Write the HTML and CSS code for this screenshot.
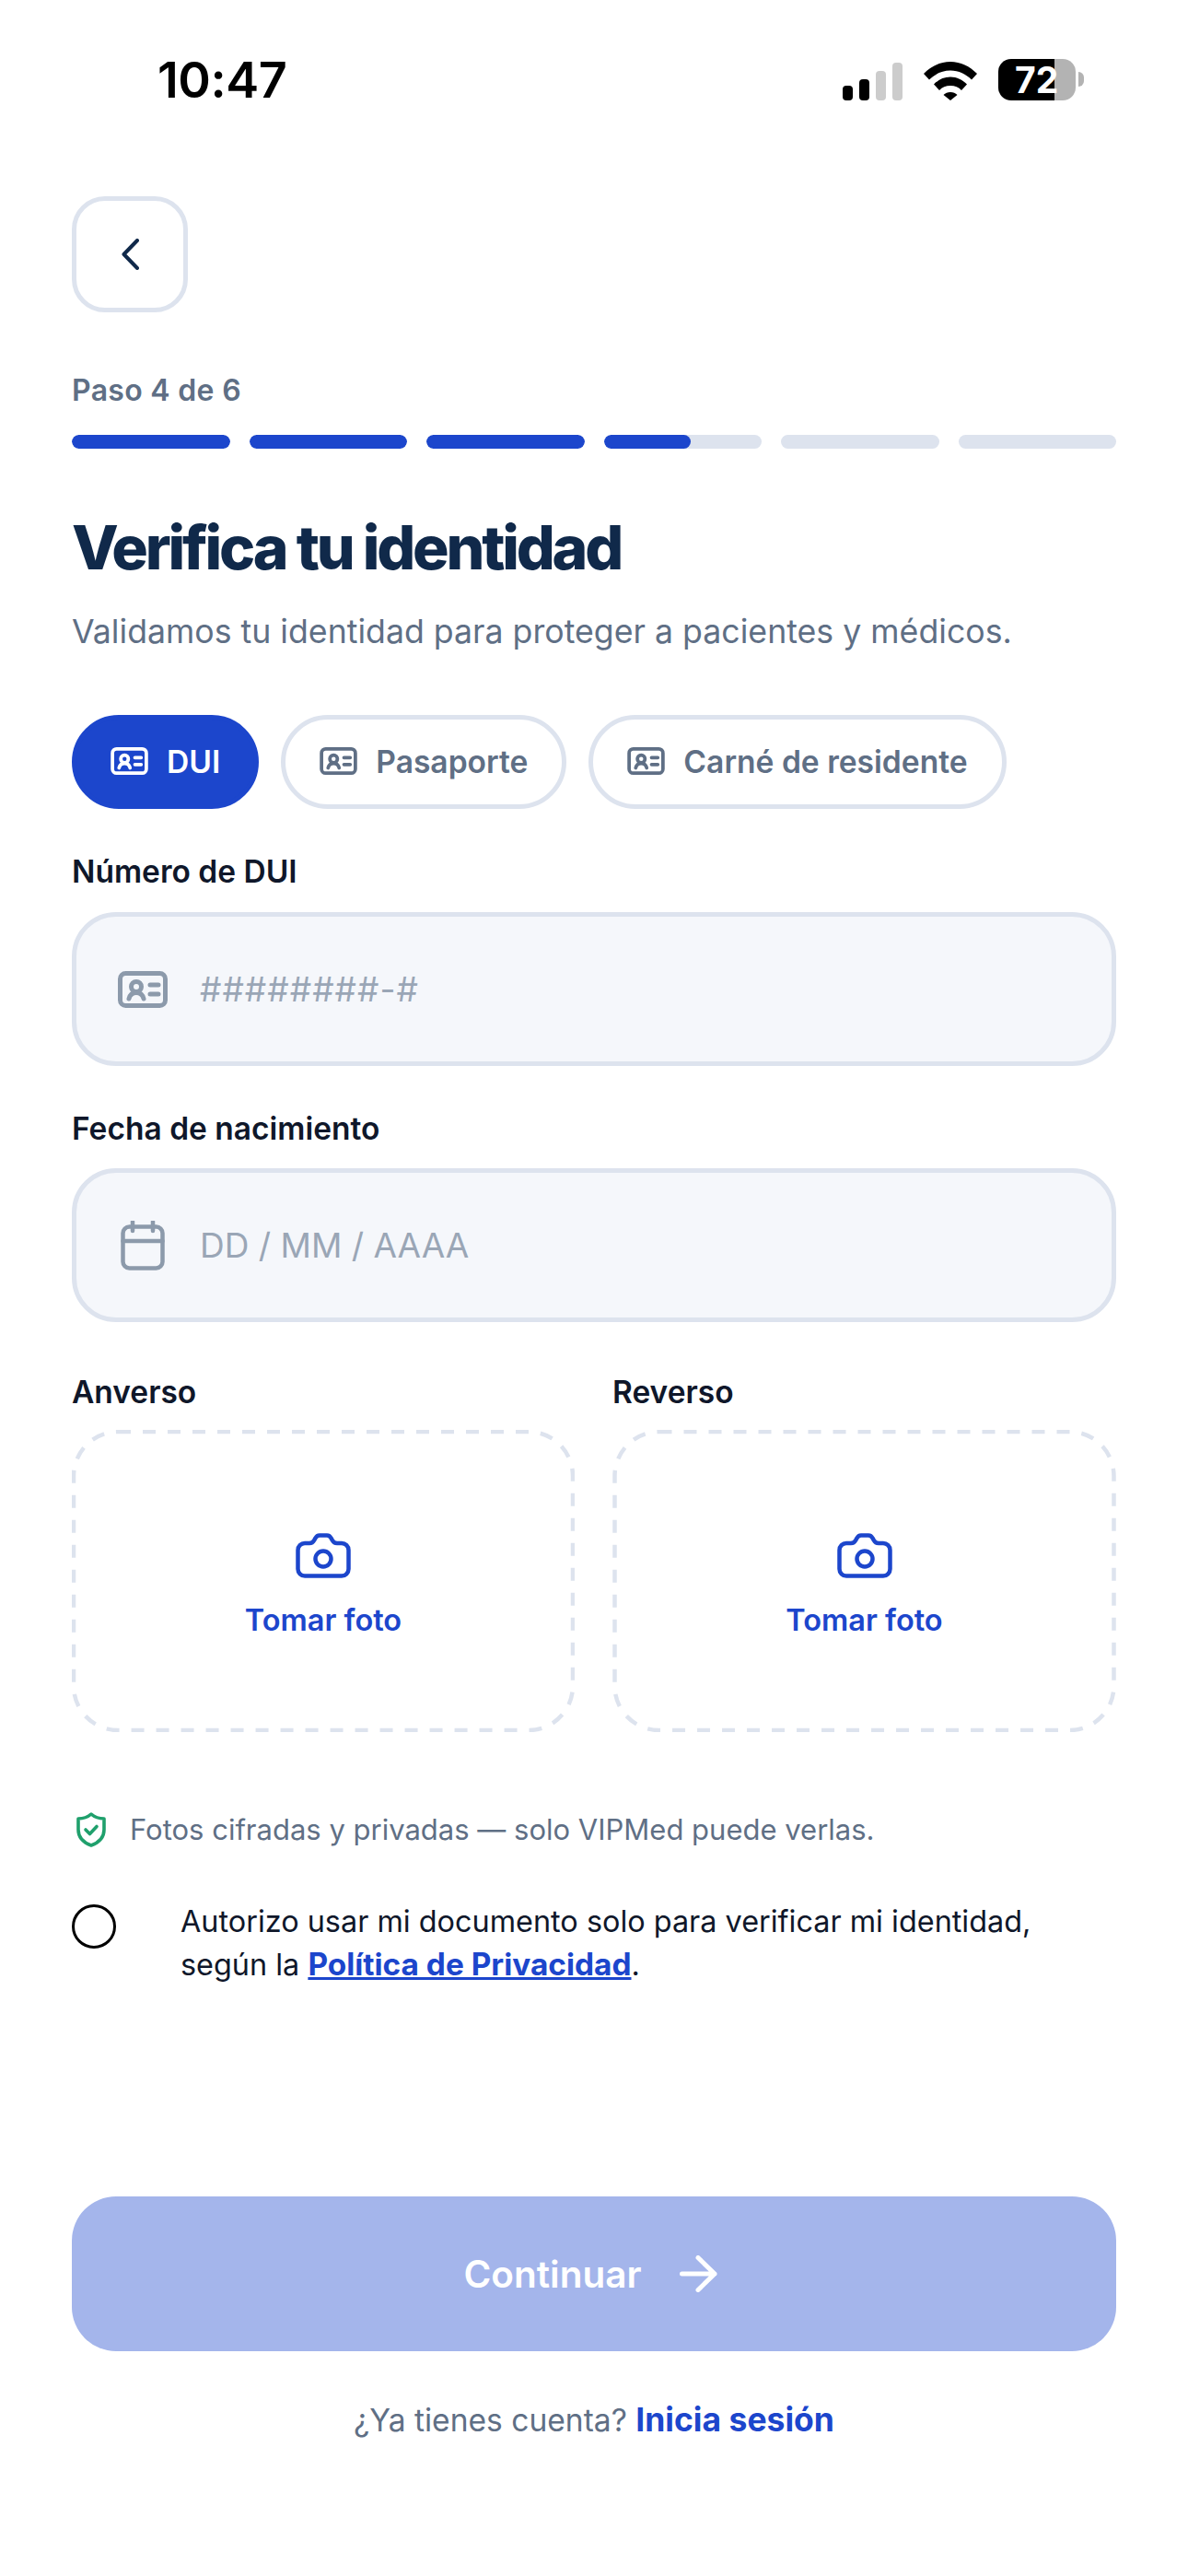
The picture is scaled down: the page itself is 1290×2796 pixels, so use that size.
FILE: index.html
```html
<!DOCTYPE html>
<html lang="es">
<head>
    <meta charset="UTF-8">
    <meta name="viewport" content="width=device-width, initial-scale=1.0">
    <title>Verifica tu identidad</title>
    <link rel="stylesheet" href="styles.css">
</head>
<body>
    <div class="status-bar">
        <span class="status-time">10:47</span>
        <div class="status-icons">
            <svg class="icon-signal" viewBox="0 0 65 41">
                <rect x="0" y="25" width="11" height="16" rx="4" fill="#000"/>
                <rect x="18" y="18" width="11" height="23" rx="4" fill="#000"/>
                <rect x="36" y="9" width="11" height="32" rx="4" fill="#ccc"/>
                <rect x="54" y="0" width="11" height="41" rx="4" fill="#ccc"/>
            </svg>
            <svg class="icon-wifi" viewBox="0 0 58 42">
                <path d="M0 13C8 5 18 0 29 0s21 5 29 13l-6 6.500C46 13.500 38 9.500 29 9.500S12 13.500 6 19.500z" fill="#000"/>
                <path d="M11 24.500C16 19.500 22 16.500 29 16.500s13 3 18 8l-6 6.500C38 27.500 34 26 29 26s-9 1.500-12 5z" fill="#000"/>
                <path d="M21.500 36c2-2 4.500-3 7.500-3s5.500 1 7.500 3L29 42z" fill="#000"/>
            </svg>
            <div class="battery"><span>72</span></div>
        </div>
    </div>

    <main class="page">
        <button class="back-btn" type="button">
            <svg viewBox="0 0 19 34" class="icon-back"><path d="M17 2 2.5 17 17 32"/></svg>
        </button>

        <div class="step-label">Paso 4 de 6</div>
        <div class="progress">
            <div class="progress-seg"><div class="progress-fill full"></div></div>
            <div class="progress-seg"><div class="progress-fill full"></div></div>
            <div class="progress-seg"><div class="progress-fill full"></div></div>
            <div class="progress-seg"><div class="progress-fill half"></div></div>
            <div class="progress-seg"></div>
            <div class="progress-seg"></div>
        </div>

        <h1 class="title">Verifica tu identidad</h1>
        <p class="subtitle">Validamos tu identidad para proteger a pacientes y médicos.</p>

        <div class="tabs">
            <div class="tab tab-active">
                <svg class="icon-id-small" viewBox="0 0 54 40"><rect x="2.5" y="2.5" width="49" height="35" rx="6"/><circle cx="20" cy="17" r="5.5"/><path d="M12 30c1-4 4-6.500 8-6.500s7 2.500 8 6.500M35 15h9M35 25h9"/></svg>
                DUI
            </div>
            <div class="tab">
                <svg class="icon-id-small" viewBox="0 0 54 40"><rect x="2.5" y="2.5" width="49" height="35" rx="6"/><circle cx="20" cy="17" r="5.5"/><path d="M12 30c1-4 4-6.500 8-6.500s7 2.500 8 6.500M35 15h9M35 25h9"/></svg>
                Pasaporte
            </div>
            <div class="tab">
                <svg class="icon-id-small" viewBox="0 0 54 40"><rect x="2.5" y="2.5" width="49" height="35" rx="6"/><circle cx="20" cy="17" r="5.5"/><path d="M12 30c1-4 4-6.500 8-6.500s7 2.500 8 6.500M35 15h9M35 25h9"/></svg>
                Carné de residente
            </div>
        </div>

        <label class="field-label label-dui">Número de DUI</label>
        <div class="input-box">
            <svg class="icon-id" viewBox="0 0 54 40"><rect x="2.5" y="2.5" width="49" height="35" rx="6"/><circle cx="20" cy="17" r="5.5"/><path d="M12 30c1-4 4-6.500 8-6.500s7 2.500 8 6.500M35 15h9M35 25h9"/></svg>
            <span class="placeholder placeholder-id">########-#</span>
        </div>

        <label class="field-label label-fecha">Fecha de nacimiento</label>
        <div class="input-box">
            <svg class="icon-calendar" viewBox="0 0 48 54"><rect x="2.5" y="6.5" width="43" height="45" rx="7"/><path d="M2.5 22h43M13 1v10M35 1v10"/></svg>
            <span class="placeholder">DD / MM / AAAA</span>
        </div>

        <div class="photos">
            <div class="photo-col">
                <div class="field-label">Anverso</div>
                <div class="photo-box">
                    <svg class="photo-dash" viewBox="0 0 546 328"><rect x="2" y="2" width="542" height="324" rx="48"/></svg>
                    <svg class="icon-camera" viewBox="0 0 60 49"><path d="M10 11h5c2.500 0 4-1 5-3l1.500-2.500c1-2 2.500-3 4.500-3h8c2 0 3.500 1 4.500 3L40 8c1 2 2.500 3 5 3h5a7.500 7.500 0 0 1 7.500 7.500V39a7.500 7.500 0 0 1-7.500 7.500H10A7.500 7.500 0 0 1 2.500 39V18.500A7.500 7.500 0 0 1 10 11z"/><circle cx="30" cy="28" r="8.5"/></svg>
                    <span class="photo-text">Tomar foto</span>
                </div>
            </div>
            <div class="photo-col">
                <div class="field-label">Reverso</div>
                <div class="photo-box">
                    <svg class="photo-dash" viewBox="0 0 546 328"><rect x="2" y="2" width="542" height="324" rx="48"/></svg>
                    <svg class="icon-camera" viewBox="0 0 60 49"><path d="M10 11h5c2.500 0 4-1 5-3l1.500-2.500c1-2 2.500-3 4.500-3h8c2 0 3.500 1 4.500 3L40 8c1 2 2.500 3 5 3h5a7.500 7.500 0 0 1 7.500 7.500V39a7.500 7.500 0 0 1-7.500 7.500H10A7.500 7.500 0 0 1 2.500 39V18.500A7.500 7.500 0 0 1 10 11z"/><circle cx="30" cy="28" r="8.5"/></svg>
                    <span class="photo-text">Tomar foto</span>
                </div>
            </div>
        </div>

        <div class="privacy-note">
            <svg class="icon-shield" viewBox="0 0 32 38"><path d="M16 2c4 3.500 9 5 14 5v12c0 9-6 14-14 17C8 33 2 28 2 19V7c5 0 10-1.500 14-5z"/><path d="M10 19l4.500 4.500L22 15.500"/></svg>
            <span>Fotos cifradas y privadas — solo VIPMed puede verlas.</span>
        </div>

        <div class="consent">
            <span class="radio"></span>
            <p>Autorizo usar mi documento solo para verificar mi identidad, según la <a href="#">Política de Privacidad</a>.</p>
        </div>

        <button class="btn-continue" type="button">
            Continuar
            <svg class="icon-arrow" viewBox="0 0 41 40"><path d="M2.5 20H38M20 2.500 38 20 20 37.500"/></svg>
        </button>

        <p class="login-line">¿Ya tienes cuenta? <a href="#">Inicia sesión</a></p>
    </main>
</body>
</html>
```

FILE: styles.css
```css
* {
    box-sizing: border-box;
}
body {
    margin: 0;
    background: #fff;
    font-family: Inter, "Noto Sans", sans-serif;
    color: #0f172a;
}

/* status bar */
.status-bar {
    height: 213px;
    padding: 0 122px 0 171px;
    display: flex;
    justify-content: space-between;
    align-items: flex-start;
}
.status-time {
    margin-top: 54px;
    font-size: 54px;
    line-height: 66px;
    font-weight: 600;
    color: #000;
    letter-spacing: -0.5px;
}
.status-icons {
    margin-top: 64px;
    display: flex;
    align-items: center;
    gap: 23px;
}
.icon-signal {
    width: 65px;
    height: 41px;
    margin-top: 3px;
}
.icon-wifi {
    width: 58px;
    height: 42px;
    margin-top: 2px;
}
.battery {
    position: relative;
    width: 84px;
    height: 45px;
    border-radius: 14px;
    background: linear-gradient(90deg, #000 72.5%, #b3b3b3 72.5%);
    color: #fff;
    font-size: 39px;
    font-weight: 700;
    line-height: 45px;
    padding-left: 18px;
}
.battery::after {
    content: "";
    position: absolute;
    right: -9px;
    top: 14px;
    width: 6px;
    height: 16px;
    border-radius: 0 8px 8px 0;
    background: #b3b3b3;
}

.page {
    padding: 0 78px;
}

.back-btn {
    width: 126px;
    height: 126px;
    padding: 0;
    display: flex;
    align-items: center;
    justify-content: center;
    background: #fff;
    border: 5px solid #dde3ee;
    border-radius: 36px;
}
.icon-back {
    width: 19px;
    height: 34px;
    fill: none;
    stroke: #10294a;
    stroke-width: 4;
    stroke-linecap: round;
    stroke-linejoin: round;
}

.step-label {
    margin-top: 66px;
    font-size: 32px;
    line-height: 38px;
    font-weight: 600;
    letter-spacing: 0.3px;
    color: #5f6f85;
}
.progress {
    margin-top: 29px;
    display: grid;
    grid-template-columns: repeat(6, 1fr);
    gap: 21px;
}
.progress-seg {
    height: 15px;
    border-radius: 8px;
    background: #dde3ee;
    overflow: hidden;
}
.progress-fill {
    height: 100%;
    border-radius: 8px;
    background: #1c46cc;
}
.full {
    width: 100%;
}
.half {
    width: 55%;
}

.title {
    margin: 67px 0 0;
    font-size: 66px;
    line-height: 80px;
    font-weight: 800;
    letter-spacing: -3.2px;
    color: #10294a;
}
.subtitle {
    margin: 28px 0 0;
    font-size: 35.7px;
    line-height: 46px;
    color: #5f6f85;
}

.tabs {
    margin-top: 68px;
    display: flex;
    gap: 24px;
}
.tab {
    height: 102px;
    padding: 0 37px 2px;
    display: flex;
    align-items: center;
    gap: 20px;
    border: 5px solid #dde3ee;
    border-radius: 51px;
    font-size: 33.6px;
    font-weight: 600;
    color: #5f6f85;
}
.tab-active {
    background: #1c46cc;
    border-color: #1c46cc;
    color: #fff;
}
.icon-id-small,
.icon-id {
    fill: none;
    stroke: currentColor;
    stroke-width: 5;
    stroke-linecap: round;
}
.icon-id-small {
    width: 41px;
    height: 30px;
}
.icon-id {
    width: 54px;
    height: 40px;
    color: #8c9aab;
}

.field-label {
    display: block;
    font-size: 33.5px;
    line-height: 40px;
    font-weight: 600;
    color: #0f172a;
}
.label-dui {
    margin-top: 48px;
}
.label-fecha {
    margin-top: 48px;
}
.input-box {
    margin-top: 23px;
    height: 167px;
    padding-left: 45px;
    display: flex;
    align-items: center;
    gap: 35px;
    background: #f5f7fb;
    border: 5px solid #dde3ee;
    border-radius: 48px;
}
.label-dui + .input-box {
    margin-top: 24px;
}
.placeholder {
    font-size: 37px;
    color: #9aa6b6;
}
.placeholder-id {
    letter-spacing: 1px;
}
.icon-calendar {
    width: 48px;
    height: 54px;
    margin-left: 3px;
    margin-right: 3px;
    fill: none;
    stroke: #8c9aab;
    stroke-width: 4.5;
    stroke-linecap: round;
}

.photos {
    margin-top: 56px;
    display: grid;
    grid-template-columns: 546px 547px;
    gap: 41px;
}
.photo-box {
    position: relative;
    margin-top: 21px;
    height: 328px;
    display: flex;
    flex-direction: column;
    align-items: center;
    padding-top: 112px;
}
.photo-dash {
    position: absolute;
    top: 0;
    left: 0;
    width: 100%;
    height: 100%;
    fill: none;
    stroke: #dde3ee;
    stroke-width: 4.5;
    stroke-dasharray: 14 13;
}
.icon-camera {
    width: 60px;
    height: 49px;
    fill: none;
    stroke: #1c46cc;
    stroke-width: 4.5;
}
.photo-text {
    margin-top: 26px;
    font-size: 32.5px;
    line-height: 40px;
    font-weight: 600;
    color: #1c46cc;
}

.privacy-note {
    margin-top: 87px;
    display: flex;
    align-items: center;
    gap: 26px;
    padding-left: 5px;
    font-size: 31px;
    line-height: 38px;
    color: #5f6f85;
}
.icon-shield {
    width: 32px;
    height: 38px;
    fill: none;
    stroke: #1fa06c;
    stroke-width: 3.6;
    stroke-linecap: round;
    stroke-linejoin: round;
}

.consent {
    margin-top: 62px;
    display: flex;
    gap: 70px;
}
.radio {
    flex: none;
    width: 48px;
    height: 48px;
    border: 3.5px solid #000;
    border-radius: 50%;
}
.consent p {
    margin: -5px 0 0;
    font-size: 32.4px;
    line-height: 47px;
    color: #0f172a;
}
.consent a {
    font-size: 33.4px;
    font-weight: 700;
    color: #1c46cc;
}

.btn-continue {
    margin-top: 228px;
    width: 100%;
    height: 168px;
    padding: 0 8px 0 0;
    display: flex;
    align-items: center;
    justify-content: center;
    gap: 41px;
    border: none;
    border-radius: 48px;
    background: #a4b5eb;
    color: #fff;
    font-family: inherit;
    font-size: 40.5px;
    font-weight: 600;
}
.icon-arrow {
    width: 41px;
    height: 40px;
    fill: none;
    stroke: #fff;
    stroke-width: 5;
    stroke-linecap: round;
    stroke-linejoin: round;
}

.login-line {
    margin: 53px 0 0;
    text-align: center;
    font-size: 33.6px;
    line-height: 44px;
    color: #5f6f85;
}
.login-line a {
    font-size: 35.5px;
    font-weight: 700;
    color: #1c46cc;
    text-decoration: none;
}
```
